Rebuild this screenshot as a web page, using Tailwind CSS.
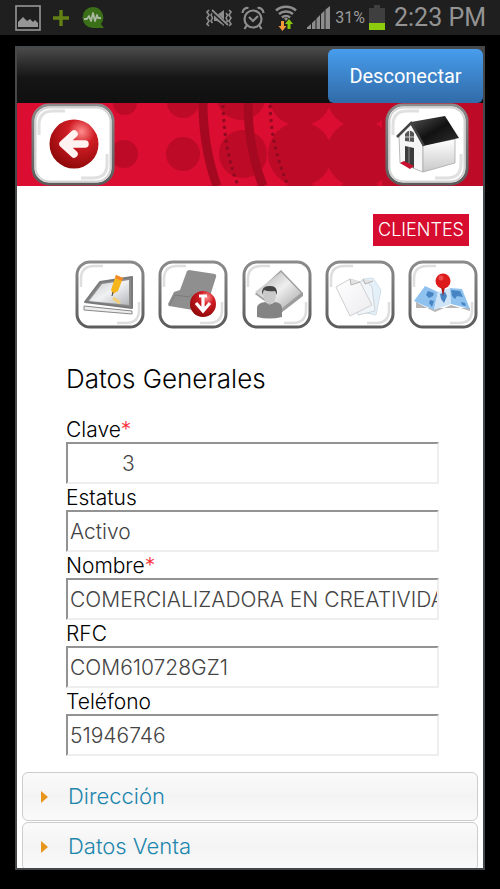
<!DOCTYPE html>
<html lang="es">
<head>
    <meta charset="UTF-8">
    <meta name="viewport" content="width=device-width, initial-scale=1.0">
    <title>Clientes - Datos Generales</title>
    <script src="https://cdn.jsdelivr.net/npm/@tailwindcss/browser@4"></script>
</head>
<body class="bg-black h-screen flex flex-col font-['Century_Gothic','Inter',sans-serif] font-light text-black">

    <!-- Barra de estado -->
    <div class="h-[35px] shrink-0 bg-[#1f1f1f] flex items-center justify-between pl-[15px] pr-[14px] font-['Roboto',sans-serif] text-[#9a9a9a]">
        <div class="flex items-center gap-3">
            <svg class="w-[26px] h-[26px]" viewBox="0 0 26 26"><rect x="1" y="1" width="24" height="24" fill="none" stroke="#969696" stroke-width="1.6"/><path d="M3 22v-5l5-5 4 4 3-2 3 3 2-2 3 3v4z" fill="#969696"/></svg>
            <svg class="w-4 h-4" viewBox="0 0 16 16"><path d="M8 0v16M0 8h16" stroke="#628014" stroke-width="3.4"/></svg>
            <svg class="w-6 h-6" viewBox="0 0 24 24"><path d="M12 1a10.500 10.500 0 1 0 0 21h11l-3-4a10.500 10.500 0 0 0-8-17z" fill="#3c7018"/><path d="M3 13h3l2-3 2 5 2-8 2 8 2-6 1 3h3" fill="none" stroke="#a9b8a0" stroke-width="1.8" stroke-linejoin="round"/></svg>
        </div>
        <div class="flex items-center gap-[9px]">
            <svg class="w-[26px] h-[18px]" viewBox="0 0 26 18" fill="none" stroke="#8d8d8d"><path d="M3 1L1 3l2 3-2 3 2 3-2 3 2 2M23 1l2 2-2 3 2 3-2 3 2 3-2 2M6.500 4L5 6l1.500 3L5 12l1.500 2M20 4l1.500 2L20 9l1.500 3-1.500 2" stroke-width="1.600"/><path d="M8 6h3l7-5v16l-7-5H8z" fill="#8d8d8d" stroke="none"/><path d="M6 2l16 15" stroke="#1f1f1f" stroke-width="3.500"/><path d="M6 1l16 15" stroke-width="1.800"/></svg>
            <svg class="w-6 h-6" viewBox="0 0 24 24" fill="none" stroke="#8d8d8d" stroke-width="2.200"><circle cx="12" cy="13" r="8.500"/><path d="M8 11l4 4 5-5M6 19l-2.500 4M18 19l2.500 4M1.500 7a5 5 0 0 1 6-5M22.500 7a5 5 0 0 0-6-5"/></svg>
            <svg class="w-6 h-[26px]" viewBox="0 0 24 26" fill="none"><path d="M2 5.500a15 15 0 0 1 20 0M5 9a11 11 0 0 1 14 0M8 12.500a6 6 0 0 1 8 0" stroke="#8d8d8d" stroke-width="2.600"/><path d="M10 13.500a3 3 0 0 1 4 0l-2 2.500z" fill="#8d8d8d"/><path d="M7 16h3v5h2.500L8.500 26l-4-5H7z" fill="#f29a3c"/><path d="M13.500 24h3v-5h2.500l-4-5-4 5h2.500z" fill="#87c80a"/></svg>
            <svg class="w-[23px] h-[23px]" viewBox="0 0 23 23" fill="#8d8d8d"><path d="M0 23v-1.500L4 18v5zM5 23v-6l3.500-3.500V23zM9.500 23V12.500L13 9v14zM14 23V8l3.500-3.500V23zM18.500 23V3.500L23 0v23z"/></svg>
            <div class="flex items-center gap-1 -ml-1">
                <span class="text-base font-normal">31%</span>
                <svg class="w-4 h-[25px]" viewBox="0 0 16 25"><path d="M5 0h6v3h5v15H0V3h5z" fill="#3f3f3f"/><path d="M0 18h16v7H0z" fill="#8ccc0c"/></svg>
            </div>
            <span class="text-[25px] leading-none font-normal text-[#939393]">2:23 PM</span>
        </div>
    </div>

    <!-- Ventana de la aplicación -->
    <main class="flex-1 min-h-0 overflow-hidden mt-[11px] mx-[15px] mb-[19px] border-2 border-[#45484a] bg-white">
        <div class="h-[55px] pt-px flex justify-end bg-linear-to-b from-[#4a4a4a] via-[#151515] via-55% to-[#101010]">
            <button type="button" class="w-[155px] rounded-md bg-linear-to-b from-[#479ded] to-[#316ba8] font-['Roboto',sans-serif] font-normal text-xl text-white">Desconectar</button>
        </div>

        <header class="relative h-[83px] bg-[#db0d30] overflow-hidden flex justify-between px-[14px]">
            <svg class="absolute inset-0 w-full h-full" viewBox="0 0 466 83" preserveAspectRatio="xMaxYMid slice">
                <g fill="#bd0b27">
                    <circle cx="108" cy="0" r="12"/><circle cx="166" cy="-1" r="16"/><circle cx="224" cy="-8" r="25"/>
                    <circle cx="107" cy="51" r="14"/><circle cx="166" cy="51" r="17"/><circle cx="226" cy="51" r="24"/>
                    <circle cx="283" cy="51" r="32"/><circle cx="343" cy="51" r="34"/><circle cx="283" cy="-9" r="32"/><circle cx="343" cy="-9" r="34"/>
                    <circle cx="283" cy="111" r="32"/><circle cx="343" cy="111" r="34"/>
                    <path d="M365 0h101v83H365z"/>
                </g>
                <path d="M186 0c0 30 4 55 14 83M231 0c0 30 4 55 15 83" fill="none" stroke="#a50922" stroke-width="9"/>
                <path d="M206 2c1 28 4 52 15 81M253 2c1 28 6 52 18 81" fill="none" stroke="#8f0a20" stroke-width="3" stroke-dasharray="3 4"/>
            </svg>
            <button type="button" aria-label="Regresar" class="relative w-[84px]">
                <svg class="w-full h-full" viewBox="0 0 84 83">
                    <defs>
                        <linearGradient id="marco" x1="0" y1="0" x2="0" y2="1"><stop offset="0" stop-color="#8b8b8b"/><stop offset="1" stop-color="#5c5c5c"/></linearGradient>
                        <radialGradient id="rojo" cx=".65" cy=".25" r=".8"><stop offset="0" stop-color="#ff8d8d"/><stop offset=".35" stop-color="#d01c24"/><stop offset="1" stop-color="#8c0808"/></radialGradient>
                    </defs>
                    <rect x="2" y="2" width="80" height="79" rx="16" fill="#fff" stroke="url(#marco)" stroke-width="3"/>
                    <rect x="4.500" y="4.500" width="75" height="74" rx="14" fill="none" stroke="#d4d4d4" stroke-width="2"/>
                    <path d="M8 32V22Q8 8 22 8h12M76 51v10q0 14-14 14H50" fill="none" stroke="#e0e0e0" stroke-width="3"/>
                    <circle cx="43" cy="41" r="24.500" fill="url(#rojo)"/>
                    <path d="M43 31L32 41l11 10M33 41h21" fill="none" stroke="#fff3f1" stroke-width="7.500" stroke-linecap="round" stroke-linejoin="round"/>
                </svg>
            </button>
            <button type="button" aria-label="Inicio" class="relative w-[84px]">
                <svg class="w-full h-full" viewBox="0 0 84 83">
                    <defs>
                        <linearGradient id="techo" x1="0" y1="0" x2="1" y2="1"><stop offset="0" stop-color="#555"/><stop offset=".5" stop-color="#111"/><stop offset="1" stop-color="#333"/></linearGradient>
                        <linearGradient id="pared" x1="0" y1="0" x2="0" y2="1"><stop offset="0" stop-color="#fff"/><stop offset="1" stop-color="#c9c9c9"/></linearGradient>
                    </defs>
                    <rect x="2" y="2" width="80" height="79" rx="16" fill="#fff" stroke="url(#marco)" stroke-width="3"/>
                    <rect x="4.500" y="4.500" width="75" height="74" rx="14" fill="none" stroke="#d4d4d4" stroke-width="2"/>
                    <path d="M8 32V22Q8 8 22 8h12M76 51v10q0 14-14 14H50" fill="none" stroke="#e0e0e0" stroke-width="3"/>
                    <path d="M14 32L26 20l12 22v27L15 60z" fill="#f6f6f6" stroke="#aaa" stroke-width=".8"/>
                    <path d="M38 42l32-6v24l-32 9z" fill="url(#pared)" stroke="#aaa" stroke-width=".8"/>
                    <path d="M26 19l34-6 14 22-36 8z" fill="url(#techo)"/>
                    <path d="M39 43L26 20 12 34" fill="none" stroke="#444" stroke-width="2.500"/>
                    <path d="M20 31q4-6 9-1v9l-9-1z" fill="#555"/><path d="M24.500 28v10M20 34h9" stroke="#ccc"/>
                    <path d="M20 43l9 2v20l-9-4z" fill="#3b3b3b"/><path d="M24 44v18" stroke="#888"/>
                    <path d="M15 60l4-2 10 5-4 3z" fill="#c8102e"/>
                </svg>
            </button>
        </header>

        <div class="flex justify-end pt-[28px] pr-[14px]">
            <span class="h-8 px-[5px] flex items-center justify-center bg-[#d60d2e] text-white text-lg">CLIENTES</span>
        </div>

        <nav class="flex justify-between pt-[14px] pl-[58px] pr-[5px]">
            <button type="button" aria-label="Editar" class="w-[70px] h-[69px]">
                <svg class="w-full h-full" viewBox="0 0 70 69">
                    <defs>
                        <linearGradient id="gris" x1="0" y1="0" x2="1" y2="1"><stop offset="0" stop-color="#a5a5a5"/><stop offset=".5" stop-color="#efefef"/><stop offset="1" stop-color="#a2a2a2"/></linearGradient>
                        <linearGradient id="papel" x1="0" y1="0" x2="1" y2="1"><stop offset="0" stop-color="#fff"/><stop offset="1" stop-color="#ececf0"/></linearGradient>
                        <linearGradient id="pantalla" x1="0" y1="0" x2="1" y2="1"><stop offset="0" stop-color="#c4c6c8"/><stop offset=".5" stop-color="#f0f1f3"/><stop offset="1" stop-color="#b4b7ba"/></linearGradient>
                    </defs>
                    <rect x="2" y="2" width="66" height="65" rx="13" fill="#fff" stroke="url(#marco)" stroke-width="3"/>
                    <path d="M6 27v-8Q6 6 19 6h9M64 42v8q0 13-13 13h-9" fill="none" stroke="#dedede" stroke-width="2.500"/>
                    <path d="M9 46l48 5v3L9 50z" fill="#eee" stroke="#888"/>
                    <path d="M25 22l32-5v31L10 42z" fill="#8a8a8a" stroke="#7a7a7a" stroke-width="2" stroke-linejoin="round"/>
                    <path d="M27 24l27-4v25l-40-4z" fill="url(#pantalla)"/>
                    <path d="M41 15l7 3-5 13-5 3-2-4z" fill="#f5b51b"/><path d="M41 15l7 3-1 3-7-3z" fill="#f5882a"/>
                    <path d="M38 38l7 5" stroke="#f3cf79" stroke-width="3"/><path d="M38 32l-1 4" stroke="#444"/>
                </svg>
            </button>
            <button type="button" aria-label="Descargar" class="w-[70px] h-[69px]">
                <svg class="w-full h-full" viewBox="0 0 70 69">
                    <rect x="2" y="2" width="66" height="65" rx="13" fill="#fff" stroke="url(#marco)" stroke-width="3"/>
                    <path d="M6 27v-8Q6 6 19 6h9M64 42v8q0 13-13 13h-9" fill="none" stroke="#dedede" stroke-width="2.500"/>
                    <path d="M31 10l26 4q2 1 1 3L47 52l-36-6-1-2 6-12 6-2 7-19z" fill="#8f8f8f"/>
                    <path d="M11 46l6-11 14 2 3-3" fill="none" stroke="#7c7c7c"/>
                    <circle cx="45" cy="44" r="13" fill="url(#rojo)"/>
                    <path d="M45 36v13M38 43l7 8 7-8M41 36h8" fill="none" stroke="#fff" stroke-width="3.200"/>
                </svg>
            </button>
            <button type="button" aria-label="Contacto" class="w-[70px] h-[69px]">
                <svg class="w-full h-full" viewBox="0 0 70 69">
                    <rect x="2" y="2" width="66" height="65" rx="13" fill="#fff" stroke="url(#marco)" stroke-width="3"/>
                    <path d="M6 27v-8Q6 6 19 6h9M64 42v8q0 13-13 13h-9" fill="none" stroke="#dedede" stroke-width="2.500"/>
                    <path d="M39 10l22 23v3L39 53 13 34z" fill="#9d9d9d"/>
                    <path d="M39 12l20 21-21 17-25-18z" fill="url(#gris)"/>
                    <path d="M15 57v-9q0-5 8-6l5 3 5-3q7 1 7 6v9q-13 3-25 0z" fill="#848484"/>
                    <path d="M21 34q0 9 7 10 6-1 6-10l-1-4H22z" fill="#c9c9c9"/>
                    <path d="M20 35q-1-9 7-9 9-1 8 9l-2-4q-7 1-11-1z" fill="#444"/>
                </svg>
            </button>
            <button type="button" aria-label="Documentos" class="w-[70px] h-[69px]">
                <svg class="w-full h-full" viewBox="0 0 70 69">
                    <rect x="2" y="2" width="66" height="65" rx="13" fill="#fff" stroke="url(#marco)" stroke-width="3"/>
                    <path d="M6 27v-8Q6 6 19 6h9M64 42v8q0 13-13 13h-9" fill="none" stroke="#dedede" stroke-width="2.500"/>
                    <path d="M38 19l10-1 8 12-5 25-20-4z" fill="#e4f0f8" stroke="#d3dfe7"/>
                    <path d="M28 23l13-3 6 7 3 24-17 4z" fill="#f0f5f9" stroke="#ced5da"/>
                    <path d="M11 27l14-8 10 3 12 23-22 11z" fill="url(#papel)" stroke="#cfcfcf"/>
                    <path d="M25 19l1 6 9-3M38 19l2 5 8-3" fill="#e4e4e4" stroke="#b4b4b4"/>
                </svg>
            </button>
            <button type="button" aria-label="Mapa" class="w-[70px] h-[69px]">
                <svg class="w-full h-full" viewBox="0 0 70 69">
                    <rect x="2" y="2" width="66" height="65" rx="13" fill="#fff" stroke="url(#marco)" stroke-width="3"/>
                    <path d="M6 27v-8Q6 6 19 6h9M64 42v8q0 13-13 13h-9" fill="none" stroke="#dedede" stroke-width="2.500"/>
                    <path d="M8 42l19 10 16-7 19 6v-3H8z" fill="#b5b5b5"/>
                    <path d="M17 26l13 6-4 18L6 41z" fill="#8fc2ee"/><path d="M30 32l12-4 1 16-17 6z" fill="#cfe5f7"/><path d="M42 28l12 1 8 20-19-5z" fill="#8fc2ee"/>
                    <path d="M20 31l6 2-1 3-4 2-3-3zM22 40l4 1-2 6-3-4zM32 34l5-2 2 4-3 7-3-4zM43 30l9 1 3 6-6-1-2 3-3-3zM53 42l4 1 1 3-4-1z" fill="#4684c4"/>
                    <path d="M33 27h4l-2 9z" fill="#a81414"/><circle cx="35" cy="21" r="7.500" fill="#de1b1b"/><circle cx="33" cy="18" r="2.500" fill="#ea4a4a"/>
                </svg>
            </button>
        </nav>

        <form class="pl-[49px] pr-[44px] pt-[34px] pb-4 text-[21px]">
            <h2 class="text-[26px] leading-8 pb-[21px]">Datos Generales</h2>

            <label for="clave" class="block h-[26px] leading-7">Clave<span class="text-red-500">*</span></label>
            <input id="clave" type="text" value="3" class="block w-full h-[42px] border-2 border-t-[#939393] border-l-[#939393] border-r-[#eeeeee] border-b-[#eeeeee] pl-[54px] text-[#444]">

            <label for="estatus" class="block h-[26px] leading-7">Estatus</label>
            <input id="estatus" type="text" value="Activo" class="block w-full h-[42px] border-2 border-t-[#939393] border-l-[#939393] border-r-[#eeeeee] border-b-[#eeeeee] pl-0.5 text-[#444]">

            <label for="nombre" class="block h-[26px] leading-7">Nombre<span class="text-red-500">*</span></label>
            <input id="nombre" type="text" value="COMERCIALIZADORA EN CREATIVIDAD" class="block w-full h-[42px] border-2 border-t-[#939393] border-l-[#939393] border-r-[#eeeeee] border-b-[#eeeeee] pl-0.5 text-[#444]">

            <label for="rfc" class="block h-[26px] leading-7">RFC</label>
            <input id="rfc" type="text" value="COM610728GZ1" class="block w-full h-[42px] border-2 border-t-[#939393] border-l-[#939393] border-r-[#eeeeee] border-b-[#eeeeee] pl-0.5 text-[#444]">

            <label for="telefono" class="block h-[26px] leading-7">Teléfono</label>
            <input id="telefono" type="text" value="51946746" class="block w-full h-[42px] border-2 border-t-[#939393] border-l-[#939393] border-r-[#eeeeee] border-b-[#eeeeee] pl-0.5 text-[#444]">
        </form>

        <!-- Acordeón -->
        <div class="flex flex-col gap-px px-[5px] text-[22px] text-[#1c86ad]">
            <button type="button" class="h-[49px] flex items-center gap-5 pl-[18px] rounded-md border border-[#cdcdcd] bg-linear-to-b from-[#fafafa] via-[#f4f4f4] to-[#fafafa]">
                <svg class="w-[7px] h-3" viewBox="0 0 7 12"><path d="M0 0l7 6-7 6z" fill="#e8951c"/></svg>
                Dirección
            </button>
            <button type="button" class="h-[49px] flex items-center gap-5 pl-[18px] rounded-md border border-[#cdcdcd] bg-linear-to-b from-[#fafafa] via-[#f4f4f4] to-[#fafafa]">
                <svg class="w-[7px] h-3" viewBox="0 0 7 12"><path d="M0 0l7 6-7 6z" fill="#e8951c"/></svg>
                Datos Venta
            </button>
        </div>
    </main>
</body>
</html>
